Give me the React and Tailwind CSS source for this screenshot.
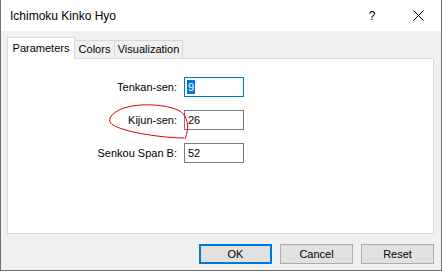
import React from "react";

const font = { fontFamily: '"Liberation Sans", Arial, sans-serif' };

function Field({ label, value, focused }) {
  return (
    <div className="flex items-center h-[20px]">
      <div className="w-[176px] text-right pr-[7px] text-[11px] text-black leading-none">{label}</div>
      <div
        className={
          "w-[60px] h-[20px] bg-white border flex items-center pl-[2px] text-[11px] leading-none " +
          (focused ? "border-[#0078d7]" : "border-[#7a7a7a]")
        }
      >
        {focused ? (
          <span className="bg-[#0078d7] text-white px-[1px] h-[14px] flex items-center">{value}</span>
        ) : (
          <span className="pl-[1px]">{value}</span>
        )}
      </div>
    </div>
  );
}

export default function App() {
  return (
    <div className="w-[442px] h-[273px] bg-white overflow-hidden" style={font}>
      <div className="h-[271px] border-l border-r border-b border-[#6f6f6f] flex flex-col">
        <div className="h-[31px] bg-white flex items-center pl-[9px] shrink-0">
          <span className="text-[12px] text-black">Ichimoku Kinko Hyo</span>
          <div className="ml-auto flex items-center">
            <span className="text-[12px] text-black w-[46px] text-center">?</span>
            <div className="w-[46px] flex justify-center">
              <svg width="11" height="11" viewBox="0 0 11 11">
                <path d="M0.5 0.5 L10.5 10.5 M10.5 0.5 L0.5 10.5" stroke="#000" strokeWidth="1" />
              </svg>
            </div>
          </div>
        </div>
        <div className="flex-1 bg-[#f0f0f0] pl-[6px] pr-[7px] pt-[6px] flex flex-col">
          <div className="flex items-end h-[21px] relative z-10">
            <div className="h-[22px] w-[68px] bg-white border border-b-0 border-[#d9d9d9] flex items-center justify-center text-[11px] -mb-[1px] relative">
              Parameters
            </div>
            <div className="h-[18px] w-[40px] bg-[#f0f0f0] border border-l-0 border-b-0 border-[#d9d9d9] flex items-center justify-center text-[11px]">
              Colors
            </div>
            <div className="h-[18px] w-[68px] bg-[#f0f0f0] border border-l-0 border-b-0 border-[#d9d9d9] flex items-center justify-center text-[11px]">
              Visualization
            </div>
          </div>
          <div className="h-[176px] bg-white border border-[#d9d9d9] relative pt-[18px] flex flex-col gap-[13px]">
            <Field label="Tenkan-sen:" value="9" focused />
            <Field label="Kijun-sen:" value="26" />
            <Field label="Senkou Span B:" value="52" />
            <svg className="absolute left-[96px] top-[43px]" width="90" height="42" viewBox="0 0 90 42">
              <path
                d="M80 36 C62 36, 22 31, 9 23 C2 19, 6 11, 20 6 C35 1, 60 2, 74 8 C84 13, 86 25, 81 37"
                fill="none"
                stroke="#e00000"
                strokeWidth="1"
              />
            </svg>
          </div>
          <div className="flex justify-end gap-[8px] mt-[10px]">
            <div className="w-[73px] h-[20px] bg-[#e1e1e1] border-2 border-[#0078d7] flex items-center justify-center text-[11px]">
              OK
            </div>
            <div className="w-[73px] h-[20px] bg-[#e1e1e1] border border-[#adadad] flex items-center justify-center text-[11px]">
              Cancel
            </div>
            <div className="w-[73px] h-[20px] bg-[#e1e1e1] border border-[#adadad] flex items-center justify-center text-[11px]">
              Reset
            </div>
          </div>
        </div>
      </div>
    </div>
  );
}
